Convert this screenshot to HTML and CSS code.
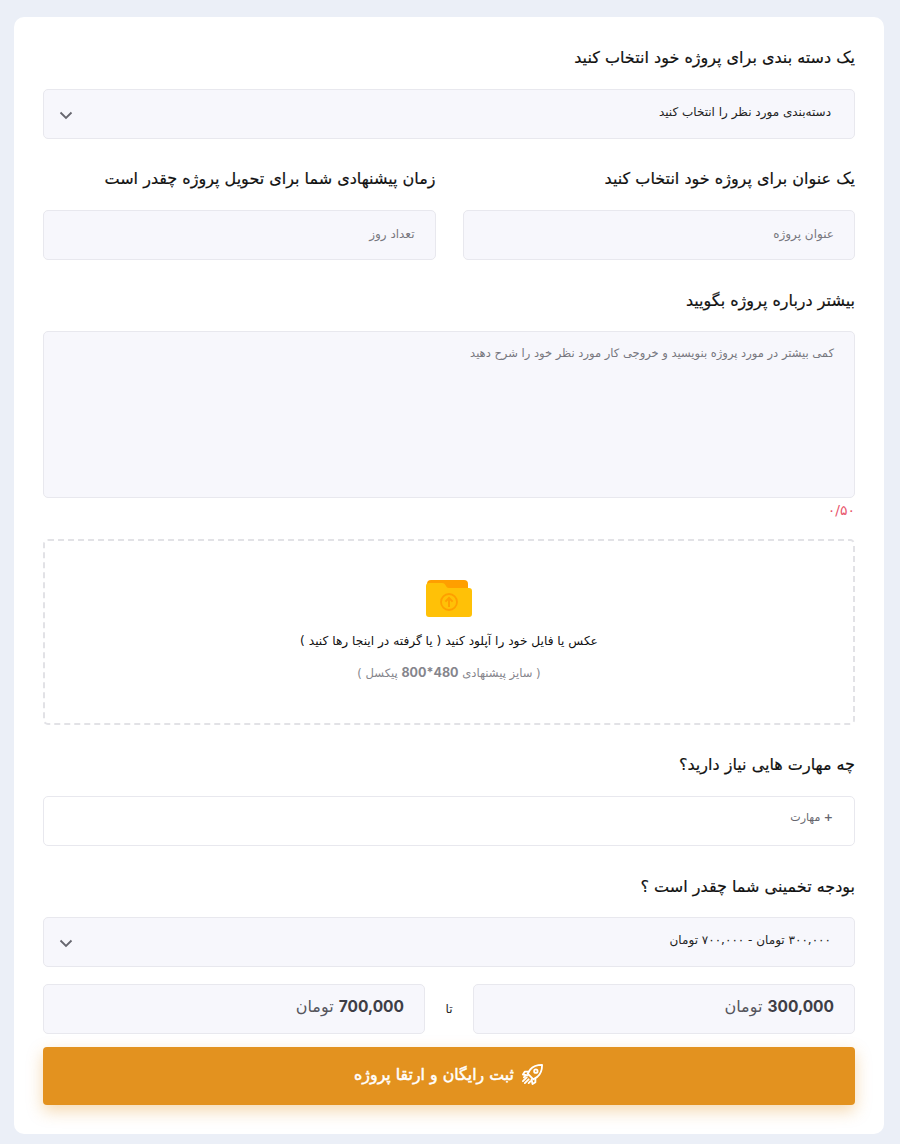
FILE: index.html
```html
<!DOCTYPE html>
<html lang="fa" dir="rtl">
<head>
    <meta charset="UTF-8">
    <title>ثبت پروژه</title>
    <link rel="stylesheet" href="styles.css">
</head>
<body>
    <form class="card">
        <h2 class="label">یک دسته بندی برای پروژه خود انتخاب کنید</h2>
        <div class="field select">
            <span>دسته‌بندی مورد نظر را انتخاب کنید</span>
            <svg class="chevron" viewBox="0 0 14 9" width="14" height="9"><path d="M1.500 1.500 7 7l5.500-5.500" fill="none" stroke="#66666e" stroke-width="1.800"/></svg>
        </div>

        <div class="two-cols">
            <div>
                <h2 class="label">یک عنوان برای پروژه خود انتخاب کنید</h2>
                <div class="field input">عنوان پروژه</div>
            </div>
            <div>
                <h2 class="label">زمان پیشنهادی شما برای تحویل پروژه چقدر است</h2>
                <div class="field input">تعداد روز</div>
            </div>
        </div>

        <h2 class="label label-about">بیشتر درباره پروژه بگویید</h2>
        <div class="field textarea">کمی بیشتر در مورد پروژه بنویسید و خروجی کار مورد نظر خود را شرح دهید</div>
        <div class="counter">۰/۵۰</div>

        <div class="dropzone">
            <svg class="folder" viewBox="0 0 46 37" width="46" height="37">
                <path d="M5 0h33a4 4 0 0 1 4 4v6H1V4a4 4 0 0 1 4-4z" fill="#ff9f00"/>
                <path d="M3 3h13c2 0 3 1 4 3 .6 1.300 1.500 2 3 2h20a3 3 0 0 1 3 3v23a3 3 0 0 1-3 3H3a3 3 0 0 1-3-3V6a3 3 0 0 1 3-3z" fill="#ffc107"/>
                <circle cx="23" cy="22" r="8" fill="none" stroke="#ff9f00" stroke-width="1.800"/>
                <path d="M23 27v-9m-3.600 3.600L23 18l3.600 3.600" fill="none" stroke="#ff9f00" stroke-width="2"/>
            </svg>
            <p class="drop-title">عکس یا فایل خود را آپلود کنید ( یا گرفته در اینجا رها کنید )</p>
            <p class="drop-hint">( سایز پیشنهادی <b>480*800</b> پیکسل )</p>
        </div>

        <h2 class="label label-skills">چه مهارت هایی نیاز دارید؟</h2>
        <div class="field skills"><b>+</b> مهارت</div>

        <h2 class="label label-budget">بودجه تخمینی شما چقدر است ؟</h2>
        <div class="field select budget">
            <span>۳۰۰,۰۰۰ تومان - ۷۰۰,۰۰۰ تومان</span>
            <svg class="chevron" viewBox="0 0 14 9" width="14" height="9"><path d="M1.500 1.500 7 7l5.500-5.500" fill="none" stroke="#66666e" stroke-width="1.800"/></svg>
        </div>

        <div class="range">
            <div class="field amount"><b>300,000</b> تومان</div>
            <span class="range-to">تا</span>
            <div class="field amount"><b>700,000</b> تومان</div>
        </div>

        <button class="submit" type="button">
            <svg viewBox="0 0 24 24" width="23" height="23" fill="none" stroke="#fff" stroke-width="1.900" stroke-linecap="round" stroke-linejoin="round">
                <path d="M22 2c-5 0-9.500 1.500-12.500 5L7 11l6 6 4-2.500C20.500 11.500 22 7 22 2z"/>
                <circle cx="15.500" cy="8.500" r="1.800"/>
                <path d="M8 9H4L2 12l5 1M15 16v4l-3 2-1-5"/>
                <path d="M6 15l-4 4M8 17l-4 4M5 13l-2 2M10 19l-2 2"/>
            </svg>
            ثبت رایگان و ارتقا پروژه
        </button>
    </form>
</body>
</html>
```

FILE: styles.css
```css
* {
    box-sizing: border-box;
}
body {
    margin: 0;
    padding: 17px 16px 10px 14px;
    background: #ebeff7;
    font-family: "DejaVu Sans", "Noto Sans", sans-serif;
    color: #1b1b1f;
}
.card {
    background: #fff;
    border-radius: 10px;
    height: 1117px;
    padding: 29px 29px 0;
}
.label {
    margin: 0;
    height: 22px;
    line-height: 23px;
    font-size: 16px;
    font-weight: 400;
    color: #111;
    -webkit-text-stroke: 0.2px #111;
}
.field {
    height: 50px;
    background: #f7f7fc;
    border: 1px solid #e8e8ee;
    border-radius: 5px;
    font-size: 12px;
}
.select {
    display: flex;
    align-items: center;
    justify-content: space-between;
    margin-top: 21px;
    padding: 0 23px 0 15px;
    font-size: 12px;
    color: #222;
}
.select span {
    margin-bottom: 4px;
}
.chevron {
    margin-top: 3px;
}
.two-cols {
    display: grid;
    grid-template-columns: 1fr 1fr;
    gap: 27px;
    margin-top: 28px;
}
.input {
    margin-top: 21px;
    padding: 0 20px;
    line-height: 46px;
    color: #77777f;
}
.label-about {
    margin-top: 29px;
}
.textarea {
    height: 167px;
    margin-top: 20px;
    padding: 14px 20px;
    font-size: 11.500px;
    color: #77777f;
}
.counter {
    margin-top: 3px;
    height: 18px;
    line-height: 18px;
    font-size: 14px;
    color: #e8566c;
    text-align: right;
}
.dropzone {
    height: 186px;
    margin-top: 20px;
    padding-top: 39px;
    border: 2px dashed #e2e2e6;
    border-radius: 5px;
    text-align: center;
}
.folder {
    display: block;
    margin: 0 auto;
}
.drop-title {
    margin: 15px 0 0;
    line-height: 18px;
    font-size: 12.200px;
    color: #111;
}
.drop-hint {
    margin: 14px 0 0;
    line-height: 18px;
    font-size: 11.600px;
    color: #85858c;
}
.drop-hint b {
    font-family: "Inter", sans-serif;
    font-size: 12.500px;
    font-weight: 700;
}
.label-skills {
    margin-top: 28px;
}
.skills {
    margin-top: 21px;
    padding: 0 21px;
    line-height: 42px;
    font-size: 11px;
    background: #fff;
    color: #66666e;
}
.label-budget {
    margin-top: 29px;
}
.budget {
    margin-top: 20px;
}
.range {
    display: flex;
    align-items: center;
    margin-top: 17px;
}
.amount {
    flex: 1;
    padding: 0 20px;
    line-height: 44px;
    font-size: 16px;
    color: #55555c;
}
.amount b {
    font-family: "Inter", sans-serif;
    font-weight: 700;
    font-size: 15.500px;
    letter-spacing: -0.2px;
    color: #3e3e46;
}
.range-to {
    width: 48px;
    text-align: center;
    font-size: 12px;
}
.submit {
    display: flex;
    align-items: center;
    justify-content: center;
    gap: 7px;
    width: 100%;
    height: 58px;
    margin-top: 13px;
    padding: 0 0 4px;
    background: #e3921f;
    border: none;
    border-radius: 4px;
    box-shadow: 0 6px 16px rgba(227, 146, 31, 0.35);
    font-family: inherit;
    font-size: 15.800px;
    font-weight: 400;
    -webkit-text-stroke: 0.5px #fff;
    color: #fff;
}
.submit svg {
    -webkit-text-stroke: 0;
}
```
